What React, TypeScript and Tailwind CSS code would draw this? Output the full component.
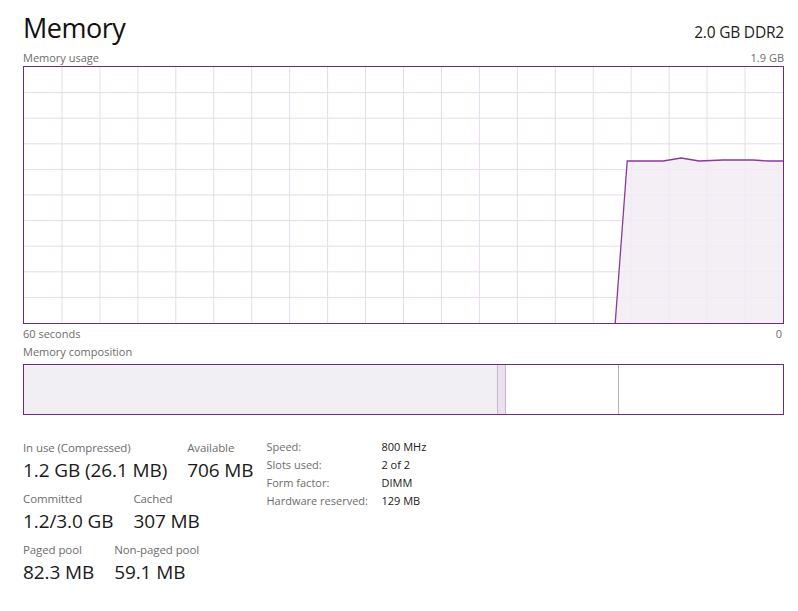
const COLS = 20;
const ROWS = 10;

// usage trace, in px inside the graph (760 x 256)
const trace: [number, number][] = [
  [592, 256],
  [604, 94],
  [640, 94],
  [658, 91],
  [676, 94],
  [700, 93],
  [730, 93],
  [745, 94],
  [760, 94],
];

function UsageGraph() {
  const w = 760;
  const h = 256;
  const line = trace.map(([x, y]) => `${x},${y}`).join(" ");
  const area = `${line} ${w},${h} ${trace[0][0]},${h}`;
  return (
    <div className="h-[258px] border border-[#6e2a7e] bg-white">
      <svg width="100%" height="100%" viewBox={`0 0 ${w} ${h}`} preserveAspectRatio="none">
        {Array.from({ length: COLS - 1 }, (_, i) => (
          <line
            key={"c" + i}
            x1={((i + 1) * w) / COLS}
            x2={((i + 1) * w) / COLS}
            y1={0}
            y2={h}
            stroke="#e6dbe9"
            strokeWidth={1}
          />
        ))}
        {Array.from({ length: ROWS - 1 }, (_, i) => (
          <line
            key={"r" + i}
            x1={0}
            x2={w}
            y1={((i + 1) * h) / ROWS}
            y2={((i + 1) * h) / ROWS}
            stroke="#e6dbe9"
            strokeWidth={1}
          />
        ))}
        <polygon points={area} fill="#f1ecf3" fillOpacity={0.85} />
        <polyline points={line} fill="none" stroke="#8b3a9b" strokeWidth={1.3} />
      </svg>
    </div>
  );
}

function Stat({ label, value }: { label: string; value: string }) {
  return (
    <div className="flex flex-col">
      <span className="text-[11.5px] leading-[16px] text-[#6d6d6d] tracking-[-0.1px]">{label}</span>
      <span className="text-[19px] leading-[28px] text-[#1a1a1a] tracking-[-0.1px]">{value}</span>
    </div>
  );
}

const specs: [string, string][] = [
  ["Speed:", "800 MHz"],
  ["Slots used:", "2 of 2"],
  ["Form factor:", "DIMM"],
  ["Hardware reserved:", "129 MB"],
];

export default function App() {
  return (
    <div className="w-[798px] h-[611px] bg-white pl-[23px] pr-[14px] font-['Open_Sans',sans-serif] overflow-hidden">
      <div className="flex justify-between items-baseline h-[50px] pt-[10px]">
        <span className="text-[27px] leading-[36px] text-[#111] tracking-[-0.5px]">Memory</span>
        <span className="text-[15.5px] leading-[36px] text-[#222] tracking-[-0.2px]">2.0 GB DDR2</span>
      </div>
      <div className="flex justify-between h-[16px] text-[11px] leading-[16px] text-[#6d6d6d]">
        <span>Memory usage</span>
        <span>1.9 GB</span>
      </div>
      <UsageGraph />
      <div className="flex justify-between h-[19px] text-[11px] leading-[19px] text-[#6d6d6d]">
        <span>60 seconds</span>
        <span className="pr-[2px]">0</span>
      </div>
      <div className="h-[21px] text-[11px] leading-[17px] text-[#6d6d6d]">Memory composition</div>
      <div className="flex h-[51px] border border-[#6e2a7e]">
        <div className="w-[473px] bg-[#f2eff4]" />
        <div className="w-[9px] bg-[#ebe0ee] border-x border-[#cbb3d2]" />
        <div className="w-[113px] bg-white border-r border-[#b4b4b4]" />
        <div className="flex-1 bg-white" />
      </div>
      <div className="flex items-start pt-[25px]">
        <div className="flex flex-col gap-[7px]">
          <div className="flex gap-[20px]">
            <Stat label="In use (Compressed)" value="1.2 GB (26.1 MB)" />
            <Stat label="Available" value="706 MB" />
          </div>
          <div className="flex gap-[20px]">
            <Stat label="Committed" value="1.2/3.0 GB" />
            <Stat label="Cached" value="307 MB" />
          </div>
          <div className="flex gap-[20px]">
            <Stat label="Paged pool" value="82.3 MB" />
            <Stat label="Non-paged pool" value="59.1 MB" />
          </div>
        </div>
        <div className="ml-[13px] -mt-[2px] grid grid-cols-[115px_auto] text-[11px] leading-[18px]">
          {specs.map(([k, v]) => (
            <div key={k} className="contents">
              <span className="text-[#6d6d6d]">{k}</span>
              <span className="text-[#1a1a1a]">{v}</span>
            </div>
          ))}
        </div>
      </div>
    </div>
  );
}
